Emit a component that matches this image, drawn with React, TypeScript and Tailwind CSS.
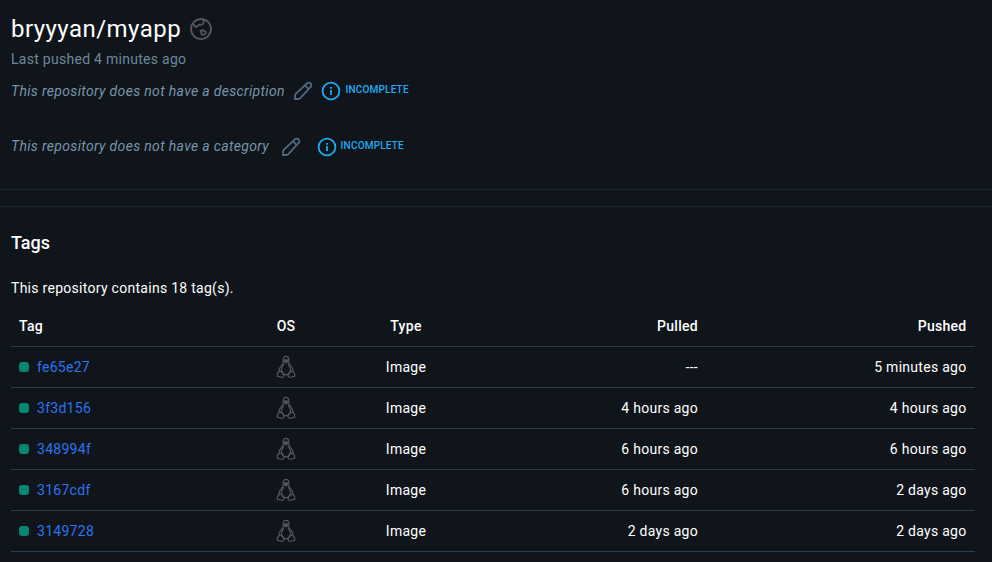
import React from "react";

const tags = [
  { name: "fe65e27", pulled: "---", pushed: "5 minutes ago" },
  { name: "3f3d156", pulled: "4 hours ago", pushed: "4 hours ago" },
  { name: "348994f", pulled: "6 hours ago", pushed: "6 hours ago" },
  { name: "3167cdf", pulled: "6 hours ago", pushed: "2 days ago" },
  { name: "3149728", pulled: "2 days ago", pushed: "2 days ago" },
];

function GlobeIcon() {
  return (
    <svg className="ml-2 size-6 text-[#515458]" viewBox="0 0 24 24" fill="none" stroke="currentColor" strokeWidth="1.9" strokeLinejoin="round">
      <circle cx="12" cy="12" r="10" />
      <path d="M4 6.500 6.800 10.200l3-2.200 3.900-.6.9-1.600-.5-3.400" />
      <path d="M11.600 13.800l2.600-.5 2.600 1.500-.2 1.700-1.700 1.300-2.200-.2z" />
    </svg>
  );
}

function PencilIcon() {
  return (
    <svg className="size-6 text-[#52697f]" viewBox="0 0 24 24" fill="none" stroke="currentColor" strokeWidth="1.8" strokeLinejoin="round">
      <path d="M4 20v-3.200c0-.8.3-1.500.9-2.100L15.900 4.300a2.600 2.600 0 0 1 3.700 3.700L9.300 19.100c-.6.600-1.300.9-2.100.9z" />
      <path d="M14 6.400l3.500 3.500" />
    </svg>
  );
}

function InfoIcon() {
  return (
    <svg className="size-5" viewBox="0 0 20 20" fill="none" stroke="currentColor" strokeWidth="1.800">
      <circle cx="10" cy="10" r="8.400" />
      <path d="M10 9v5M10 6v1.700" />
    </svg>
  );
}

function LinuxIcon() {
  return (
    <svg className="mx-auto h-6 w-5 text-[#53565a]" viewBox="0 0 20 24" fill="none" stroke="currentColor" strokeWidth="1.200" strokeLinejoin="round">
      <path d="M7.200 8V4.500C7.200 2.300 8.200 1.400 10 1.400s2.800 1 2.800 3.100V8c.8 1.900 3.600 4 4.100 6.700.2 1 .1 1.700-.2 2.300M7.200 8c-.8 1.900-3.600 4-4.100 6.700-.2 1-.1 1.700.2 2.300" />
      <path d="M7.700 9c-.5 2-2.300 3.600-2.400 5.800 0 1.600 1.700 3.300 3.100 4.900h3.200c1.400-1.600 3.100-3.300 3.100-4.900-.1-2.200-1.900-3.800-2.400-5.800" />
      <path d="M8.200 5.300l1.800-.8 1.800.8v1.300L10 7.900 8.200 6.600z" fill="currentColor" />
      <path d="M1.500 18.200l2.200-2 1.900.4 2.600 3.700-1 1.700-2 .3-4-1.200zM18.500 18.200l-2.200-2-1.900.4-2.600 3.700 1 1.700 2 .3 4-1.200z" />
    </svg>
  );
}

function Incomplete() {
  return (
    <span className="flex items-center gap-1 text-[#21aaf0]">
      <InfoIcon />
      <span className="-mt-0.5 text-[10px] leading-4 font-medium tracking-[0.2px]">INCOMPLETE</span>
    </span>
  );
}

export default function App() {
  return (
    <main className="h-[562px] overflow-hidden bg-[#10151b] font-['Roboto',sans-serif] text-sm leading-5 tracking-[0.28px] text-white">
      <header className="flex h-[190px] flex-col border-b border-[#1d2630] px-[11px] pt-3">
        <div className="flex h-[34px] items-center">
          <h1 className="text-2xl leading-[34px] tracking-[0.46px]">bryyyan/myapp</h1>
          <GlobeIcon />
        </div>
        <p className="mt-[3px] text-[#6c889c]">Last pushed 4 minutes ago</p>
        <div className="mt-[10px] flex h-6 items-center">
          <span className="tracking-[0.33px] text-[#7794ab] italic">This repository does not have a description</span>
          <span className="mr-1.5 ml-[6.5px]"><PencilIcon /></span>
          <Incomplete />
        </div>
        <div className="mt-8 flex h-6 items-center">
          <span className="-mt-0.5 tracking-[0.33px] text-[#7794ab] italic">This repository does not have a category</span>
          <span className="mr-3.5 ml-[9.5px]"><PencilIcon /></span>
          <Incomplete />
        </div>
      </header>
      <section className="mt-4 border-t border-[#1d2630] pr-[17px] pl-[11px]">
        <h2 className="mt-6 text-lg leading-6 font-medium tracking-normal">Tags</h2>
        <p className="mt-[23px]">This repository contains 18 tag(s).</p>
        <table className="mt-2 w-[964px] table-fixed border-separate border-spacing-0">
          <colgroup>
            <col className="w-[215px]" />
            <col className="w-[120px]" />
            <col className="w-[120px]" />
            <col className="w-[240px]" />
            <col className="w-[269px]" />
          </colgroup>
          <thead>
            <tr className="h-[41px] *:border-b *:border-[#2c3e4e] *:px-2 *:py-0 *:font-medium">
              <th className="text-left">Tag</th>
              <th className="text-center">OS</th>
              <th className="text-center">Type</th>
              <th className="text-right">Pulled</th>
              <th className="text-right last:pr-[8.5px]">Pushed</th>
            </tr>
          </thead>
          <tbody>
            {tags.map((tag) => (
              <tr key={tag.name} className="h-[41px] *:border-b *:border-[#2c3e4e] *:px-2 *:py-0">
                <td>
                  <div className="flex items-center gap-2">
                    <span className="size-2.5 rounded-[3px] bg-[#058670]" />
                    <a className="text-[#2c74ef]">{tag.name}</a>
                  </div>
                </td>
                <td><LinuxIcon /></td>
                <td className="text-center">Image</td>
                <td className="text-right">{tag.pulled}</td>
                <td className="text-right last:pr-[8.5px]">{tag.pushed}</td>
              </tr>
            ))}
          </tbody>
        </table>
      </section>
    </main>
  );
}
